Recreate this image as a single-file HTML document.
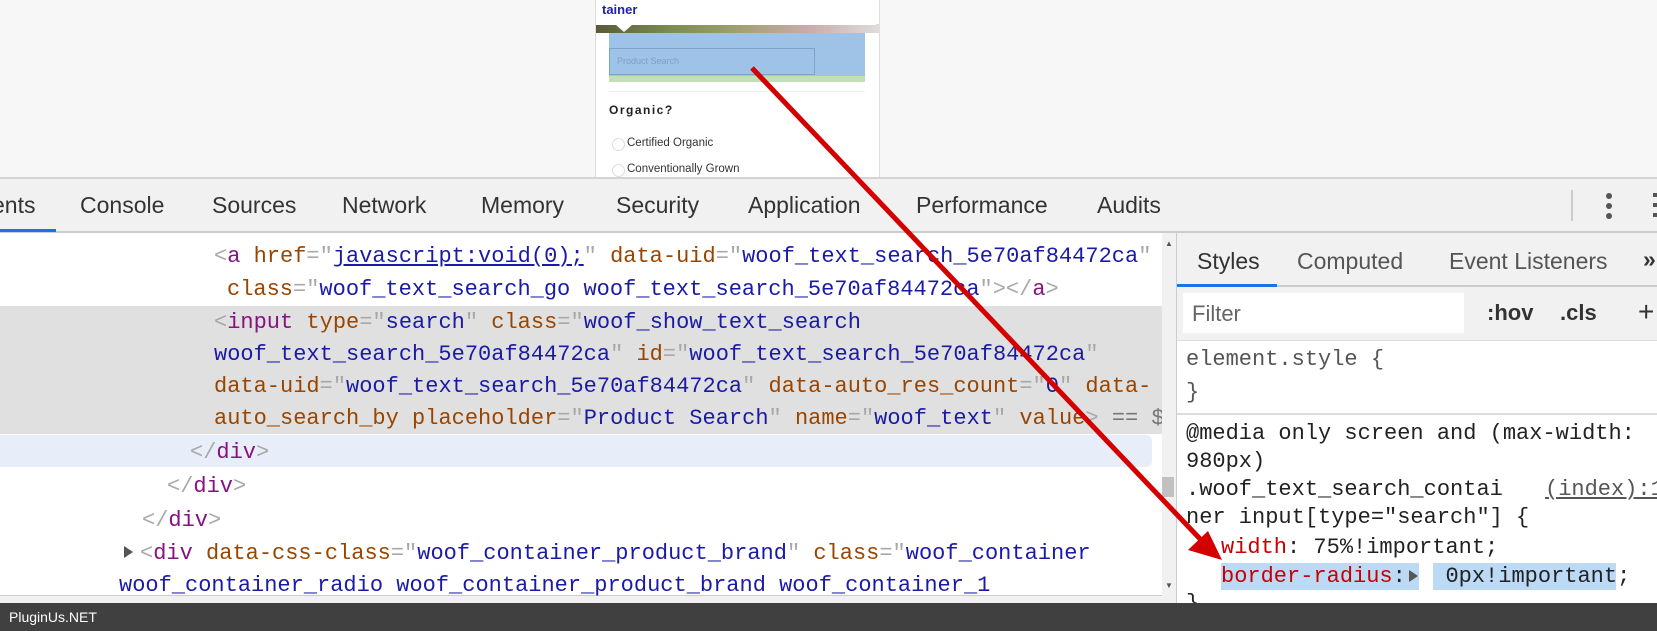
<!DOCTYPE html>
<html><head><meta charset="utf-8"><style>
*{margin:0;padding:0;box-sizing:border-box}
body{width:1657px;height:631px;overflow:hidden;background:#f7f7f7;position:relative;font-family:"Liberation Sans",sans-serif}
.abs{position:absolute}
.m{font-family:"Liberation Mono",monospace;font-size:22px;white-space:pre;position:absolute;line-height:33px}
.t{color:#881280}.an{color:#994500}.av{color:#1a1aa6}.p{color:#a8a8a8}
.tab{position:absolute;top:192px;font-size:23px;color:#333;white-space:nowrap}
.s{font-family:"Liberation Mono",monospace;font-size:22px;white-space:pre;position:absolute;line-height:28px;color:#222}
</style></head><body>
<!-- phone preview -->
<div class="abs" style="left:595px;top:0;width:285px;height:178px;background:#fff;border-left:1px solid #ddd;border-right:1px solid #ddd"></div>
<div class="abs" style="left:596px;top:24px;width:283px;height:9px;background:linear-gradient(90deg,#5a5a3a,#7a8a50,#a0a070,#caa,#ddd)"></div>
<div class="abs" style="left:596px;top:0;width:280px;height:25px;background:#fff"></div>
<div class="abs" style="left:616px;top:25px;width:0;height:0;border-left:8px solid transparent;border-right:8px solid transparent;border-top:7px solid #fff"></div>
<div class="abs" style="left:602px;top:2px;font-size:13px;font-weight:bold;color:#2222aa">tainer</div>
<div class="abs" style="left:609px;top:33px;width:256px;height:43px;background:#9fc3e6"></div>
<div class="abs" style="left:609px;top:76px;width:256px;height:6px;background:#c3dfb8"></div>
<div class="abs" style="left:609px;top:48px;width:206px;height:27px;border:1px solid #7fa3c8"></div>
<div class="abs" style="left:617px;top:56px;font-size:9px;color:#7f9fc0">Product Search</div>
<div class="abs" style="left:609px;top:91px;width:256px;height:1px;background:#eee"></div>
<div class="abs" style="left:609px;top:103px;font-size:12px;font-weight:bold;letter-spacing:1.5px;color:#222">Organic?</div>
<div class="abs" style="left:612px;top:138px;width:13px;height:13px;border:1px solid #ddd;border-radius:50%"></div>
<div class="abs" style="left:627px;top:137px;font-size:11.5px;color:#333">Certified Organic</div>
<div class="abs" style="left:612px;top:164px;width:13px;height:13px;border:1px solid #ddd;border-radius:50%"></div>
<div class="abs" style="left:627px;top:163px;font-size:11.5px;color:#333">Conventionally Grown</div>

<!-- devtools tab bar -->
<div class="abs" style="left:0;top:177px;width:1657px;height:56px;background:#f1f1f1;border-top:2px solid #d4d4d4;border-bottom:2px solid #ccc"></div>
<div class="abs" style="left:0;top:229px;width:56px;height:3px;background:#1a73e8"></div>
<div class="tab" style="left:-8px">ents</div>
<div class="tab" style="left:80px">Console</div>
<div class="tab" style="left:212px">Sources</div>
<div class="tab" style="left:342px">Network</div>
<div class="tab" style="left:481px">Memory</div>
<div class="tab" style="left:616px">Security</div>
<div class="tab" style="left:748px">Application</div>
<div class="tab" style="left:916px">Performance</div>
<div class="tab" style="left:1097px">Audits</div>
<div class="abs" style="left:1571px;top:190px;width:2px;height:31px;background:#ccc"></div>
<div class="abs" style="left:1606px;top:193px;width:6px;height:6px;border-radius:50%;background:#555;box-shadow:0 10px 0 #555,0 20px 0 #555"></div>
<div class="abs" style="left:1653px;top:193px;width:4px;height:4px;background:#555;box-shadow:0 10px 0 #555,0 20px 0 #555"></div>

<!-- elements panel -->
<div class="abs" style="left:0;top:233px;width:1176px;height:370px;background:#fff;overflow:hidden">
<div class="abs" style="left:0;top:73px;width:1162px;height:128px;background:#e0e0e0"></div>
<div class="abs" style="left:0;top:202px;width:1152px;height:32px;background:#e8eef9;border-radius:0 6px 6px 0"></div>
<div class="abs" style="left:1162px;top:0;width:14px;height:370px;background:#f1f1f1"></div>
<div class="abs" style="left:1162px;top:244px;width:12px;height:20px;background:#c1c1c1"></div>
<div class="abs" style="left:1165px;top:6px;font-size:8px;color:#555">▲</div>
<div class="abs" style="left:1165px;top:348px;font-size:8px;color:#555">▼</div>
<div class="abs" style="left:0;top:362px;width:1162px;height:8px;background:#f1f1f1;border-top:1px solid #ccc"></div>
</div>
<div class="abs" style="left:0;top:233px;width:1162px;height:370px;overflow:hidden">
<div class="m" style="left:214px;top:7px"><span class="p">&lt;</span><span class="t">a</span> <span class="an">href</span><span class="p">="</span><span class="av" style="text-decoration:underline">javascript:void(0);</span><span class="p">"</span> <span class="an">data-uid</span><span class="p">="</span><span class="av">woof_text_search_5e70af84472ca</span><span class="p">"</span></div>
<div class="m" style="left:227px;top:40px"><span class="an">class</span><span class="p">="</span><span class="av">woof_text_search_go woof_text_search_5e70af84472ca</span><span class="p">"&gt;&lt;/</span><span class="t">a</span><span class="p">&gt;</span></div>
<div class="m" style="left:214px;top:73px"><span class="p">&lt;</span><span class="t">input</span> <span class="an">type</span><span class="p">="</span><span class="av">search</span><span class="p">"</span> <span class="an">class</span><span class="p">="</span><span class="av">woof_show_text_search</span></div>
<div class="m" style="left:214px;top:105px"><span class="av">woof_text_search_5e70af84472ca</span><span class="p">"</span> <span class="an">id</span><span class="p">="</span><span class="av">woof_text_search_5e70af84472ca</span><span class="p">"</span></div>
<div class="m" style="left:214px;top:137px"><span class="an">data-uid</span><span class="p">="</span><span class="av">woof_text_search_5e70af84472ca</span><span class="p">"</span> <span class="an">data-auto_res_count</span><span class="p">="</span><span class="av">0</span><span class="p">"</span> <span class="an">data-</span></div>
<div class="m" style="left:214px;top:169px"><span class="an">auto_search_by</span> <span class="an">placeholder</span><span class="p">="</span><span class="av">Product Search</span><span class="p">"</span> <span class="an">name</span><span class="p">="</span><span class="av">woof_text</span><span class="p">"</span> <span class="an">value</span><span class="p">&gt;</span> <span style="color:#777">== $0</span></div>
<div class="m" style="left:190px;top:203px"><span class="p">&lt;/</span><span class="t">div</span><span class="p">&gt;</span></div>
<div class="m" style="left:167px;top:237px"><span class="p">&lt;/</span><span class="t">div</span><span class="p">&gt;</span></div>
<div class="m" style="left:142px;top:271px"><span class="p">&lt;/</span><span class="t">div</span><span class="p">&gt;</span></div>
<div class="abs" style="left:124px;top:313px;width:0;height:0;border-left:9px solid #555;border-top:6px solid transparent;border-bottom:6px solid transparent"></div>
<div class="m" style="left:140px;top:304px"><span class="p">&lt;</span><span class="t">div</span> <span class="an">data-css-class</span><span class="p">="</span><span class="av">woof_container_product_brand</span><span class="p">"</span> <span class="an">class</span><span class="p">="</span><span class="av">woof_container</span></div>
<div class="m" style="left:119px;top:336px"><span class="av">woof_container_radio woof_container_product_brand woof_container_1</span></div>
</div>

<!-- styles panel -->
<div class="abs" style="left:1176px;top:233px;width:481px;height:370px;background:#fff;border-left:1px solid #ccc"></div>
<div class="abs" style="left:1177px;top:233px;width:480px;height:54px;background:#f1f1f1;border-bottom:2px solid #ccc"></div>
<div class="abs" style="left:1177px;top:284px;width:100px;height:3px;background:#1a73e8"></div>
<div class="tab" style="left:1197px;top:248px;color:#333">Styles</div>
<div class="tab" style="left:1297px;top:248px;color:#555">Computed</div>
<div class="tab" style="left:1449px;top:248px;color:#555">Event Listeners</div>
<div class="tab" style="left:1643px;top:246px;color:#333;font-weight:bold">»</div>
<div class="abs" style="left:1177px;top:287px;width:480px;height:54px;background:#f1f1f1;border-bottom:1px solid #ddd"></div>
<div class="abs" style="left:1183px;top:293px;width:281px;height:40px;background:#fff"></div>
<div class="abs" style="left:1192px;top:301px;font-size:22px;color:#666">Filter</div>
<div class="abs" style="left:1487px;top:300px;font-size:22px;font-weight:bold;color:#333">:hov</div>
<div class="abs" style="left:1560px;top:300px;font-size:22px;font-weight:bold;color:#333">.cls</div>
<div class="abs" style="left:1638px;top:296px;font-size:28px;color:#333">+</div>
<div class="s" style="left:1186px;top:346px;color:#555">element.style {</div>
<div class="s" style="left:1186px;top:379px;color:#555">}</div>
<div class="abs" style="left:1177px;top:413px;width:480px;height:2px;background:#ddd"></div>
<div class="s" style="left:1186px;top:420px">@media only screen and (max-width:</div>
<div class="s" style="left:1186px;top:448px">980px)</div>
<div class="s" style="left:1186px;top:476px">.woof_text_search_contai</div>
<div class="s" style="left:1545px;top:476px;color:#555;text-decoration:underline">(index):1</div>
<div class="s" style="left:1186px;top:504px">ner input[type="search"] {</div>
<div class="s" style="left:1221px;top:534px"><span style="color:#c80000">width</span>: 75%!important;</div>
<div class="abs" style="left:1221px;top:563px;width:198px;height:27px;background:#bcdaf6"></div>
<div class="abs" style="left:1433px;top:563px;width:183px;height:27px;background:#bcdaf6"></div>
<div class="s" style="left:1221px;top:563px"><span style="color:#c80000">border-radius</span>:   0px!important;</div>
<div class="abs" style="left:1413px;top:570px;width:0;height:0;border-left:9px solid #555;border-top:6px solid transparent;border-bottom:6px solid transparent;margin-left:-4px"></div>
<div class="s" style="left:1186px;top:590px">}</div>

<!-- bottom bar -->
<div class="abs" style="left:0;top:603px;width:1657px;height:28px;background:#404040"></div>
<div class="abs" style="left:9px;top:609px;font-size:14px;color:#fff">PluginUs.NET</div>

<!-- arrow -->
<svg class="abs" style="left:0;top:0" width="1657" height="631">
<line x1="752" y1="68" x2="1203" y2="542" stroke="#d40000" stroke-width="5"/>
<polygon points="1222,560 1188,550 1208,531" fill="#d40000"/>
</svg>
</body></html>
